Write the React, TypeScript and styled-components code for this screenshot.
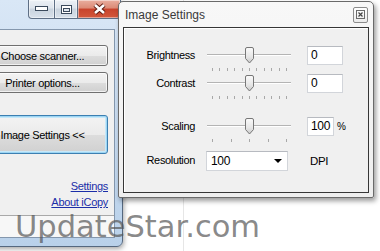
import styled, { createGlobalStyle } from "styled-components";

const GlobalStyle = createGlobalStyle`
  html, body {
    margin: 0;
    padding: 0;
    background: #fff;
  }
  body {
    font-family: "Liberation Sans", Arial, sans-serif;
  }
`;

type SliderRowProps = {
  label: string;
  value: string;
  ticks: number;
  position: number;
  fieldWidth: number;
  unit?: string;
  top?: number;
  height: number;
};

const ThumbIcon = () => (
  <svg width="11" height="17" viewBox="0 0 11 17">
    <defs>
      <linearGradient id="thumbFill" x1="0" y1="0" x2="0" y2="1">
        <stop offset="0" stopColor="#fbfbfb" />
        <stop offset="0.6" stopColor="#e6e6e6" />
        <stop offset="1" stopColor="#c9c9c9" />
      </linearGradient>
    </defs>
    <path
      d="M1.5 2 Q1.5 0.5 3 0.5 H8 Q9.5 0.5 9.5 2 V11.5 L5.5 16 L1.5 11.5 Z"
      fill="url(#thumbFill)"
      stroke="#777"
    />
  </svg>
);

const SliderRow = ({
  label,
  value,
  ticks,
  position,
  fieldWidth,
  unit,
  top = 0,
  height,
}: SliderRowProps) => (
  <Row $top={top} $height={height}>
    <Label>{label}</Label>
    <Slider>
      <Track />
      <Thumb $pos={position}>
        <ThumbIcon />
      </Thumb>
      <Ticks>
        {Array.from({ length: ticks }).map((_, i) => (
          <Tick key={i} />
        ))}
      </Ticks>
    </Slider>
    <Field $width={fieldWidth}>{value}</Field>
    {unit && <Unit>{unit}</Unit>}
  </Row>
);

const App = () => {
  return (
    <>
      <GlobalStyle />
      <Desktop>
        {/* main iCopy window */}
        <MainWindow>
          <CaptionButtons>
            <CaptionButton $width={27} $kind="min">
              <svg width="13" height="6" viewBox="0 0 13 6">
                <rect x="0.5" y="0.5" width="12" height="4" fill="#fff" stroke="#3b4a5c" />
              </svg>
            </CaptionButton>
            <CaptionButton $width={23} $kind="max">
              <svg width="11" height="9" viewBox="0 0 11 9">
                <rect x="0.5" y="0.5" width="10" height="8" fill="#fff" stroke="#3b4a5c" />
                <rect x="2.5" y="3.5" width="6" height="3" fill="#dfe6ee" stroke="#3b4a5c" />
              </svg>
            </CaptionButton>
            <CaptionButton $width={43} $kind="close">
              <svg width="15" height="12" viewBox="0 0 15 12">
                <path d="M3 2 L12 10 M12 2 L3 10" stroke="#5b1a10" strokeWidth="4.4" />
                <path d="M3 2 L12 10 M12 2 L3 10" stroke="#fff" strokeWidth="2.6" />
              </svg>
            </CaptionButton>
          </CaptionButtons>
          <Client>
            <ClientBody>
              <PushButton $height={21}>Choose scanner...</PushButton>
              <PushButton $height={21} $gap={6}>
                Printer options...
              </PushButton>
              <PushButton $height={39} $gap={22} $focused>
                Image Settings &lt;&lt;
              </PushButton>
              <Links>
                <Link>Settings</Link>
                <Link>About iCopy</Link>
              </Links>
            </ClientBody>
            <StatusBar />
          </Client>
        </MainWindow>

        {/* Image Settings tool window */}
        <ToolWindow>
          <ToolTitleBar>
            <ToolTitle>Image Settings</ToolTitle>
            <ToolClose>
              <svg width="9" height="9" viewBox="0 0 9 9">
                <rect x="0.5" y="0.5" width="8" height="8" fill="none" stroke="#6a6a6a" />
                <path d="M2.5 2.5 L6.5 6.5 M6.5 2.5 L2.5 6.5" stroke="#444" strokeWidth="1.2" />
              </svg>
            </ToolClose>
          </ToolTitleBar>
          <Panel>
            <SliderRow label="Brightness" value="0" ticks={11} position={50} fieldWidth={36} height={28} />
            <SliderRow label="Contrast" value="0" ticks={11} position={50} fieldWidth={36} height={28} />
            <SliderRow
              label="Scaling"
              value="100"
              ticks={5}
              position={50}
              fieldWidth={27}
              unit="%"
              top={15}
              height={34}
            />
            <Row $height={20}>
              <Label>Resolution</Label>
              <Combo>
                100
                <ComboArrow />
              </Combo>
              <DpiLabel>DPI</DpiLabel>
            </Row>
          </Panel>
        </ToolWindow>

        <Watermark>UpdateStar.com</Watermark>
      </Desktop>
    </>
  );
};

export default App;

const Desktop = styled.div`
  position: relative;
  width: 380px;
  height: 251px;
  overflow: hidden;
  background: linear-gradient(
    to right,
    #fff 183px,
    #e6e6e6 183px,
    #e6e6e6 184px,
    #fff 184px
  );
`;

const MainWindow = styled.div`
  position: absolute;
  left: -38px;
  top: -1px;
  width: 161px;
  height: 248px;
  box-sizing: border-box;
  display: flex;
  flex-direction: column;
  padding: 0 7px 8px;
  border: 1px solid #55687f;
  border-radius: 6px;
  background: linear-gradient(180deg, #d9e7f6 0%, #cadcf0 45%, #b9d1ea 100%);
  box-shadow: 1px 2px 5px rgba(0, 0, 0, 0.35);
`;

const CaptionButtons = styled.div`
  display: flex;
  align-self: flex-end;
  margin-right: -6px;
  height: 29px;
`;

const CaptionButton = styled.div<{ $width: number; $kind: "min" | "max" | "close" }>`
  width: ${({ $width }) => $width}px;
  height: 19px;
  box-sizing: border-box;
  display: flex;
  align-items: center;
  justify-content: center;
  border: 1px solid #5e6f85;
  border-top: none;
  border-left: ${({ $kind }) => ($kind === "min" ? "1px solid #5e6f85" : "none")};
  border-radius: ${({ $kind }) =>
    $kind === "min" ? "0 0 0 4px" : $kind === "close" ? "0 0 4px 0" : "0"};
  background: ${({ $kind }) =>
    $kind === "close"
      ? "linear-gradient(180deg, #e9ae9f 0%, #dc8a76 45%, #c8432c 50%, #d2583c 100%)"
      : "linear-gradient(180deg, #edf1f6 0%, #dde4ec 45%, #c9d3de 50%, #d8e1ea 100%)"};
  box-shadow: inset 0 0 0 1px rgba(255, 255, 255, 0.45);
`;

const Client = styled.div`
  flex: 1;
  display: flex;
  flex-direction: column;
  background: #f0f0f0;
  border: 1px solid #8497ad;
`;

const ClientBody = styled.div`
  flex: 1;
  display: flex;
  flex-direction: column;
  padding: 15px 6px 0;
`;

const PushButton = styled.div<{ $height: number; $gap?: number; $focused?: boolean }>`
  height: ${({ $height }) => $height}px;
  margin-top: ${({ $gap }) => $gap ?? 0}px;
  box-sizing: border-box;
  display: flex;
  align-items: center;
  justify-content: center;
  font-size: 11px;
  letter-spacing: -0.3px;
  color: #000;
  border: 1px solid ${({ $focused }) => ($focused ? "#3c7fb1" : "#707070")};
  border-radius: 3px;
  background: linear-gradient(180deg, #f3f3f3 0%, #ebebeb 50%, #dddddd 51%, #d0d0d0 100%);
  box-shadow: ${({ $focused }) =>
    $focused
      ? "inset 0 0 0 1px #9dd5f3, inset 0 0 0 2px #c6e8f9"
      : "inset 0 0 0 1px rgba(255, 255, 255, 0.7)"};
`;

const Links = styled.div`
  display: flex;
  flex-direction: column;
  align-items: flex-end;
  gap: 2px;
  margin-top: 25px;
`;

const Link = styled.span`
  font-size: 11px;
  line-height: 14px;
  letter-spacing: -0.3px;
  color: #1b2ea8;
  text-decoration: underline;
`;

const StatusBar = styled.div`
  height: 21px;
  border-top: 1px solid #a9a9a9;
  background: #f7f7f7;
`;

const ToolWindow = styled.div`
  position: absolute;
  left: 118px;
  top: 1px;
  width: 256px;
  height: 197px;
  box-sizing: border-box;
  display: flex;
  flex-direction: column;
  padding: 0 4px 4px;
  border: 1px solid #6a6a6a;
  border-radius: 5px 5px 2px 2px;
  background: linear-gradient(180deg, #f8f8f8 0%, #eeeeee 100%);
  box-shadow: 2px 3px 5px rgba(0, 0, 0, 0.4);
`;

const ToolTitleBar = styled.div`
  height: 25px;
  display: flex;
  align-items: center;
  justify-content: space-between;
  padding-left: 2px;
`;

const ToolTitle = styled.span`
  font-size: 12px;
  color: #3a3a3a;
`;

const ToolClose = styled.div`
  width: 15px;
  height: 16px;
  margin-right: 1px;
  box-sizing: border-box;
  display: flex;
  align-items: center;
  justify-content: center;
  border: 1px solid #8c8c8c;
  border-radius: 2px;
  background: linear-gradient(180deg, #ffffff 0%, #ebebeb 100%);
`;

const Panel = styled.div`
  flex: 1;
  display: flex;
  flex-direction: column;
  padding-top: 18px;
  background: #f0f0f0;
  border: 1px solid #363636;
  box-shadow: inset 1px 1px 0 #ffffff;
`;

const Row = styled.div<{ $height: number; $top?: number }>`
  height: ${({ $height }) => $height}px;
  margin-top: ${({ $top }) => $top ?? 0}px;
  display: flex;
  align-items: flex-start;
  font-size: 11px;
  letter-spacing: -0.35px;
  color: #000;
`;

const Label = styled.span`
  width: 71px;
  height: 19px;
  line-height: 19px;
  text-align: right;
`;

const Slider = styled.div`
  position: relative;
  width: 84px;
  height: 28px;
  margin-left: 12px;
`;

const Track = styled.div`
  position: absolute;
  left: 0;
  right: 0;
  top: 8px;
  height: 1px;
  background: #b4b4b4;
  border-bottom: 1px solid #fff;
`;

const Thumb = styled.div<{ $pos: number }>`
  position: absolute;
  top: 1px;
  left: calc(${({ $pos }) => $pos}% - 5px);
  width: 11px;
  height: 17px;
  display: flex;
`;

const Ticks = styled.div`
  position: absolute;
  left: 5px;
  right: 4px;
  top: 22px;
  display: flex;
  justify-content: space-between;
`;

const Tick = styled.span`
  width: 1px;
  height: 3px;
  background: #a8a8a8;
`;

const Field = styled.div<{ $width: number }>`
  width: ${({ $width }) => $width}px;
  height: 19px;
  box-sizing: border-box;
  margin-left: 16px;
  padding-left: 3px;
  line-height: 17px;
  font-size: 12px;
  background: #fff;
  border: 1px solid #d2d5da;
  border-top-color: #b7bac0;
`;

const Unit = styled.span`
  margin-left: 3px;
  line-height: 19px;
  font-size: 10px;
`;

const Combo = styled.div`
  width: 82px;
  height: 20px;
  box-sizing: border-box;
  margin-left: 11px;
  padding: 0 5px 0 4px;
  line-height: 18px;
  font-size: 12px;
  background: #fff;
  border: 1px solid #d2d5da;
  border-top-color: #b7bac0;
  display: flex;
  align-items: center;
  justify-content: space-between;
`;

const ComboArrow = styled.span`
  width: 0;
  height: 0;
  border-left: 4px solid transparent;
  border-right: 4px solid transparent;
  border-top: 4px solid #000;
`;

const DpiLabel = styled.span`
  margin-left: 22px;
  line-height: 20px;
  font-size: 11.5px;
`;

const Watermark = styled.div`
  position: absolute;
  left: 15px;
  top: 211px;
  font-family: "DejaVu Sans", "Liberation Sans", sans-serif;
  font-size: 30.5px;
  line-height: 31px;
  color: rgba(85, 85, 85, 0.7);
  white-space: nowrap;
  pointer-events: none;
`;
